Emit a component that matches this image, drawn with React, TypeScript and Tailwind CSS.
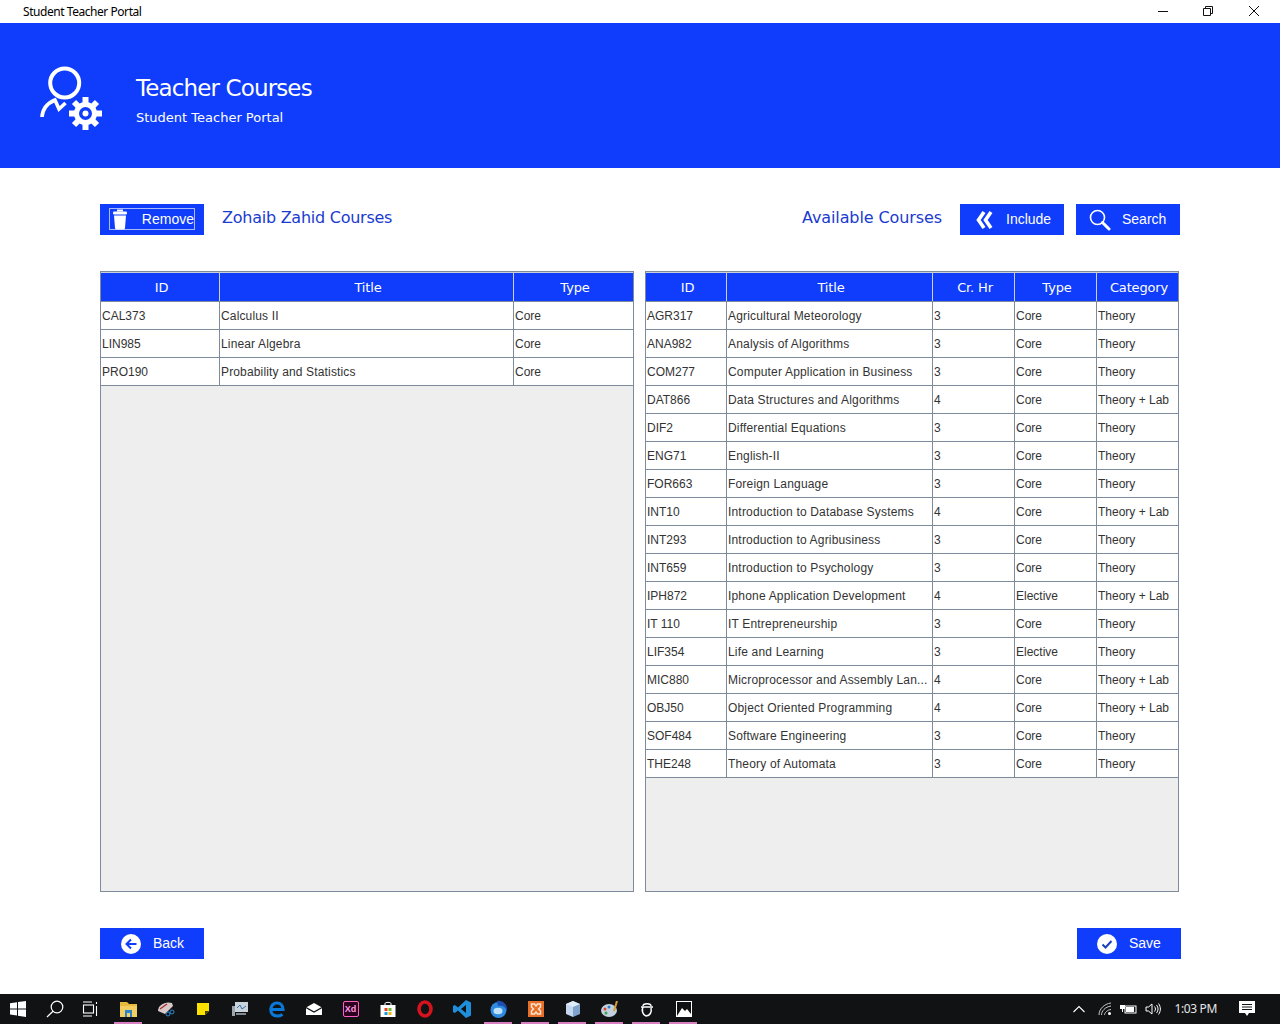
import React from "react";

const BLUE = "bg-[#0f3dfb]";

function HeaderIcon() {
  return (
    <svg width="64" height="68" viewBox="0 0 64 68" fill="none" stroke="white">
      <circle cx="24.7" cy="20" r="14.5" strokeWidth="4" />
      <path d="M2 54 C2.5 46 8 40 15 37 L19 46 L25.5 40" strokeWidth="3.6" />
      <circle cx="45.5" cy="50.5" r="9" strokeWidth="5" />
      <circle cx="45.5" cy="50.5" r="3" fill="white" stroke="none" />
      <g strokeWidth="6">
        <path d="M45.5 34 V40" /><path d="M45.5 61 V67" /><path d="M29 50.5 H35" /><path d="M56 50.5 H62" />
        <path d="M34 39 L38 43" /><path d="M53 58 L57 62" /><path d="M57 39 L53 43" /><path d="M38 58 L34 62" />
      </g>
    </svg>
  );
}

function Btn({ icon, label, w, gap, pad }: { icon: React.ReactNode; label: string; w: string; gap: string; pad: string }) {
  return (
    <div className={`${BLUE} ${w} ${pad} h-[31px] flex items-center text-white text-[14px] font-['Liberation_Sans',sans-serif]`}>
      <span className="shrink-0 flex items-center">{icon}</span>
      <span className={gap}>{label}</span>
    </div>
  );
}

type Col = { name: string; head: string; w: string; cell: string };

function Table({ cols, rows, outer }: { cols: Col[]; rows: string[][]; outer: string }) {
  return (
    <div className={`${outer} h-[621px] border border-[#7d8b9c] bg-[#eeeeee]`}>
      <div className="flex h-[30px] bg-[#c9d0d8] pt-px border-b border-[#7d8b9c] bg-clip-padding">
        {cols.map((c, i) => (
          <div
            key={c.name}
            className={`${c.head} ${BLUE} h-[28px] pl-[3px] pt-px flex items-center justify-center text-white text-[13px] font-['DejaVu_Sans',sans-serif] tracking-[-0.15px] ${i < cols.length - 1 ? "mr-px" : ""}`}
          >
            {c.name}
          </div>
        ))}
      </div>
      {rows.map((r) => (
        <div key={r[0]} className="flex h-[28px] bg-white border-b border-[#7d8b9c]">
          {r.map((v, i) => (
            <div
              key={i}
              className={`${cols[i].w} ${cols[i].cell} pl-px ${i < cols.length - 1 ? "border-r" : ""} border-[#7d8b9c] flex items-center text-[12px] text-[#333333] font-['Liberation_Sans',sans-serif] whitespace-nowrap overflow-hidden`}
            >
              {v}
            </div>
          ))}
        </div>
      ))}
    </div>
  );
}

const leftCols: Col[] = [
  { name: "ID", head: "w-[118px]", w: "w-[119px]", cell: "" },
  { name: "Title", head: "w-[293px]", w: "w-[294px]", cell: "tracking-[0.15px]" },
  { name: "Type", head: "w-[119px]", w: "w-[119px]", cell: "" },
];
const rightCols: Col[] = [
  { name: "ID", head: "w-[80px]", w: "w-[81px]", cell: "" },
  { name: "Title", head: "w-[205px]", w: "w-[206px]", cell: "tracking-[0.18px]" },
  { name: "Cr. Hr", head: "w-[81px]", w: "w-[82px]", cell: "" },
  { name: "Type", head: "w-[81px]", w: "w-[82px]", cell: "" },
  { name: "Category", head: "w-[81px]", w: "w-[81px]", cell: "" },
];
const leftRows = [
  ["CAL373", "Calculus II", "Core"],
  ["LIN985", "Linear Algebra", "Core"],
  ["PRO190", "Probability and Statistics", "Core"],
];
const rightRows = [
  ["AGR317", "Agricultural Meteorology", "3", "Core", "Theory"],
  ["ANA982", "Analysis of Algorithms", "3", "Core", "Theory"],
  ["COM277", "Computer Application in Business", "3", "Core", "Theory"],
  ["DAT866", "Data Structures and Algorithms", "4", "Core", "Theory + Lab"],
  ["DIF2", "Differential Equations", "3", "Core", "Theory"],
  ["ENG71", "English-II", "3", "Core", "Theory"],
  ["FOR663", "Foreign Language", "3", "Core", "Theory"],
  ["INT10", "Introduction to Database Systems", "4", "Core", "Theory + Lab"],
  ["INT293", "Introduction to Agribusiness", "3", "Core", "Theory"],
  ["INT659", "Introduction to Psychology", "3", "Core", "Theory"],
  ["IPH872", "Iphone Application Development", "4", "Elective", "Theory + Lab"],
  ["IT 110", "IT Entrepreneurship", "3", "Core", "Theory"],
  ["LIF354", "Life and Learning", "3", "Elective", "Theory"],
  ["MIC880", "Microprocessor and Assembly Lan...", "4", "Core", "Theory + Lab"],
  ["OBJ50", "Object Oriented Programming", "4", "Core", "Theory + Lab"],
  ["SOF484", "Software Engineering", "3", "Core", "Theory"],
  ["THE248", "Theory of Automata", "3", "Core", "Theory"],
];

function TaskIcon({ children, active }: { children: React.ReactNode; active?: boolean }) {
  return (
    <div className="relative w-[37px] h-[30px] flex items-center justify-center shrink-0">
      {children}
      {active && <div className="absolute bottom-0 left-[4px] right-[5px] h-[2px] bg-[#d77fc0]" />}
    </div>
  );
}

export default function App() {
  return (
    <div className="w-[1280px] h-[1024px] flex flex-col bg-white overflow-hidden">
      <div className="h-[23px] flex items-center pl-[23px] text-[12px] text-black font-['Noto_Sans',sans-serif] tracking-[-0.45px] shrink-0">
        <span className="flex-1">Student Teacher Portal</span>
        <svg width="122" height="23" viewBox="0 0 122 23" fill="none" stroke="#111" strokeWidth="1">
          <path d="M0 11.5 H10" />
          <path d="M45.5 8.5 h7 v7 h-7 z M47.5 8.5 v-2 h7 v7 h-2" />
          <path d="M91 6 L101 16 M101 6 L91 16" />
        </svg>
      </div>

      <div className={`${BLUE} h-[145px] shrink-0 flex items-center pl-[40px]`}>
        <div className="mt-[3px]"><HeaderIcon /></div>
        <div className="ml-[32px] text-white font-['DejaVu_Sans',sans-serif] mt-[7px]">
          <div className="text-[23px] leading-[30px] tracking-[-0.87px]">Teacher Courses</div>
          <div className="text-[13px] leading-[17px] mt-[6px]">Student Teacher Portal</div>
        </div>
      </div>

      <div className="flex-1 px-[100px] pt-[36px] flex flex-col">
        <div className="flex items-center h-[31px]">
          <div className={`${BLUE} w-[104px] h-[31px] p-[4px_9px_4px_9px] shrink-0`}>
            <div className="h-[22px] border border-[#a9b9fb] flex items-center justify-between text-white text-[14px] font-['Liberation_Sans',sans-serif]">
              <svg width="16" height="21" viewBox="0 0 16 21" fill="white" className="ml-[2px]">
                <rect x="1" y="2.5" width="14" height="3" rx="1" />
                <rect x="5" y="0.5" width="6" height="2" />
                <path d="M2 6.5 H14 L13 19 Q13 20.5 11 20.5 H5 Q3 20.5 3 19 Z" />
              </svg>
              <span className="pt-px">Remove</span>
            </div>
          </div>
          <div className="ml-[18px] text-[#1a3bd0] text-[16px] font-['DejaVu_Sans',sans-serif] tracking-[-0.25px] mt-[-3px]">Zohaib Zahid Courses</div>
          <div className="ml-auto text-[#1a3bd0] text-[16px] font-['DejaVu_Sans',sans-serif] tracking-[-0.1px] mt-[-3px]">Available Courses</div>
          <div className="ml-[18px]">
            <Btn
              w="w-[104px]" pad="pl-[15px]" gap="ml-[13px]" label="Include"
              icon={
                <svg width="18" height="20" viewBox="0 0 18 20" fill="none" stroke="white" strokeWidth="3.6">
                  <path d="M9 2 L3.5 10 L9 18" /><path d="M16 2 L10.5 10 L16 18" />
                </svg>
              }
            />
          </div>
          <div className="ml-[12px]">
            <Btn
              w="w-[104px]" pad="pl-[13px]" gap="ml-[11px]" label="Search"
              icon={
                <svg width="22" height="22" viewBox="0 0 22 22" fill="none" stroke="white">
                  <circle cx="8.5" cy="8.5" r="7" strokeWidth="1.6" />
                  <path d="M13.5 13.5 L20 20" strokeWidth="3" strokeLinecap="round" />
                </svg>
              }
            />
          </div>
        </div>

        <div className="flex mt-[36px]">
          <Table outer="w-[534px]" cols={leftCols} rows={leftRows} />
          <div className="w-[11px]" />
          <Table outer="w-[534px]" cols={rightCols} rows={rightRows} />
        </div>

        <div className="flex justify-between mt-[36px] w-[1081px]">
          <Btn
            w="w-[104px]" pad="pl-[21px]" gap="ml-[12px]" label="Back"
            icon={
              <svg width="20" height="20" viewBox="0 0 20 20">
                <circle cx="10" cy="10" r="10" fill="white" />
                <path d="M15.5 10 H5.5 M10 5.5 L5.5 10 L10 14.5" fill="none" stroke="#0f3dfb" strokeWidth="2" />
              </svg>
            }
          />
          <Btn
            w="w-[104px]" pad="pl-[20px]" gap="ml-[12px]" label="Save"
            icon={
              <svg width="20" height="20" viewBox="0 0 20 20">
                <circle cx="10" cy="10" r="10" fill="white" />
                <path d="M5.5 10.5 L8.5 13.5 L14.5 7" fill="none" stroke="#1c3fc0" strokeWidth="2" />
              </svg>
            }
          />
        </div>
      </div>

      <div className="h-[30px] bg-[#111214] shrink-0 flex items-center text-white">
        <div className="w-[36px] h-[30px] flex items-center justify-center">
          <svg width="16" height="16" viewBox="0 0 16 16" fill="white">
            <path d="M0 2.3 L7 1.3 V7.4 H0 Z M8 1.1 L16 0 V7.4 H8 Z M0 8.4 H7 V14.6 L0 13.6 Z M8 8.4 H16 V16 L8 14.8 Z" />
          </svg>
        </div>
        <TaskIcon>
          <svg width="18" height="18" viewBox="0 0 18 18" fill="none" stroke="white" strokeWidth="1.2">
            <circle cx="11" cy="7" r="5.8" /><path d="M7 11.3 L1 17" />
          </svg>
        </TaskIcon>
        <TaskIcon>
          <svg width="16" height="16" viewBox="0 0 16 16" fill="none" stroke="white" strokeWidth="1.1" className="mr-[4px]">
            <path d="M1 1 H10 M1 15 H10" /><rect x="1.5" y="4" width="10" height="8" /><path d="M14.5 1 V3 M14.5 5 V15" />
          </svg>
        </TaskIcon>
        <TaskIcon active>
          <svg width="18" height="16" viewBox="0 0 18 16">
            <path d="M0 1 H7 L9 3 H17 V6 H0 Z" fill="#e8b93c" /><rect x="0" y="5" width="17" height="11" fill="#f3cf63" /><rect x="5" y="9" width="7" height="7" fill="#2a86c8" /><rect x="7" y="12" width="3" height="4" fill="#f3cf63" />
          </svg>
        </TaskIcon>
        <TaskIcon>
          <svg width="18" height="16" viewBox="0 0 18 16">
            <path d="M1 10 C1 4 8 0 15 2 L16 5 L8 13 Z" fill="#d9c9c9" /><path d="M3 8 L10 3" stroke="#a33" strokeWidth="1.5" /><circle cx="11" cy="13" r="2" fill="none" stroke="#2a8ad0" /><circle cx="15" cy="11" r="2" fill="none" stroke="#2a8ad0" />
          </svg>
        </TaskIcon>
        <TaskIcon>
          <svg width="12" height="12" viewBox="0 0 12 12">
            <path d="M0 0 H12 V8 L8 12 H0 Z" fill="#ffe100" /><path d="M12 8 H8 V12 Z" fill="#443c00" />
          </svg>
        </TaskIcon>
        <TaskIcon>
          <svg width="16" height="16" viewBox="0 0 16 16">
            <rect x="3" y="1" width="13" height="10" fill="#c9d3dc" /><path d="M5 7 L8 4 L10 8 L14 5" stroke="#3a6ea8" fill="none" /><rect x="0" y="5" width="3" height="10" fill="#9aa7ad" /><rect x="4" y="12" width="10" height="2" fill="#7f8b90" />
          </svg>
        </TaskIcon>
        <TaskIcon>
          <svg width="16" height="17" viewBox="0 0 16 17" fill="none" stroke="#0a78d7" strokeWidth="3.2">
            <path d="M2 8.5 H14 C14 4.5 11.5 2 8 2 C4.5 2 1.8 5 1.8 8.5 C1.8 12.5 4.5 15 8.5 15 C10.5 15 12 14.5 13.5 13.5" />
          </svg>
        </TaskIcon>
        <TaskIcon>
          <svg width="16" height="12" viewBox="0 0 16 12">
            <path d="M0 4.5 L8 0 L16 4.5 V12 H0 Z" fill="white" /><path d="M0 4.5 L8 9 L16 4.5" fill="none" stroke="#111214" strokeWidth="1.2" />
          </svg>
        </TaskIcon>
        <TaskIcon>
          <div className="w-[16px] h-[16px] rounded-[2px] border border-[#ff5fc4] bg-[#2e001f] text-[#ff9ae0] text-[9px] font-bold leading-[14px] text-center font-['Liberation_Sans',sans-serif]">Xd</div>
        </TaskIcon>
        <TaskIcon>
          <svg width="16" height="16" viewBox="0 0 16 16">
            <rect x="0.5" y="4" width="15" height="12" fill="white" /><path d="M5 5 V2.5 C5 1 11 1 11 2.5 V5" fill="none" stroke="white" /><rect x="4.5" y="7" width="3" height="3" fill="#e8431f" /><rect x="8.5" y="7" width="3" height="3" fill="#6ebb2c" /><rect x="4.5" y="11" width="3" height="3" fill="#1a9be0" /><rect x="8.5" y="11" width="3" height="3" fill="#f5b50e" />
          </svg>
        </TaskIcon>
        <TaskIcon>
          <svg width="16" height="18" viewBox="0 0 16 18">
            <ellipse cx="8" cy="9" rx="6" ry="7" fill="none" stroke="#d5121d" strokeWidth="3.6" />
          </svg>
        </TaskIcon>
        <TaskIcon>
          <svg width="18" height="18" viewBox="0 0 18 18">
            <path d="M13 0 L18 2.5 V15.5 L13 18 L5 10.5 L1.8 13 L0 12 V6 L1.8 5 L5 7.5 Z M13 5 L8 9 L13 13 Z" fill="#1f8fdc" fillRule="evenodd" />
          </svg>
        </TaskIcon>
        <TaskIcon active>
          <svg width="18" height="18" viewBox="0 0 18 18">
            <circle cx="8.5" cy="10" r="8" fill="#2f8be0" /><path d="M7 1 C13 0 18 5 17 11 C15 6 12 5 8 6 Z" fill="#1c4fb0" /><ellipse cx="8" cy="11" rx="4.5" ry="3.2" fill="#bfe2fb" />
          </svg>
        </TaskIcon>
        <TaskIcon active>
          <svg width="16" height="16" viewBox="0 0 16 16">
            <rect width="16" height="16" fill="#e66f2a" /><path d="M3.5 3 H6.5 L8 5 L9.5 3 H12.5 V6 L10.5 8 L12.5 10 V13 H9.5 L8 11 L6.5 13 H3.5 V10 L5.5 8 L3.5 6 Z" fill="none" stroke="#ffe3cf" strokeWidth="1.5" />
          </svg>
        </TaskIcon>
        <TaskIcon active>
          <svg width="14" height="16" viewBox="0 0 14 16">
            <path d="M7 0 L14 3 V13 L7 16 Z" fill="#7fa3cc" /><path d="M7 0 L0 3 V13 L7 16 Z" fill="#c4d7ee" /><path d="M0 3 L7 6 L14 3 L7 0 Z" fill="#e0ebf8" />
          </svg>
        </TaskIcon>
        <TaskIcon active>
          <svg width="18" height="16" viewBox="0 0 18 16">
            <ellipse cx="8" cy="9.5" rx="8" ry="6.5" fill="#c3d1de" /><circle cx="4" cy="8" r="1.5" fill="#e0442e" /><circle cx="8" cy="6" r="1.5" fill="#2a7fcf" /><circle cx="5" cy="12" r="1.5" fill="#3aa352" /><path d="M16 0 L13 10" stroke="#d99a3a" strokeWidth="2" />
          </svg>
        </TaskIcon>
        <TaskIcon active>
          <svg width="14" height="16" viewBox="0 0 14 16" fill="none" stroke="white" strokeWidth="1.5">
            <path d="M3 5 C3 2 11 2 11 5 M1 6 H13 M3 6 C1.5 9 2.5 14 6 15 C10 15 12 11 11 7" />
          </svg>
        </TaskIcon>
        <TaskIcon active>
          <svg width="16" height="16" viewBox="0 0 16 16">
            <rect width="16" height="16" fill="white" /><rect x="1" y="1" width="14" height="14" fill="#111" /><path d="M1 15 L6 7 L9 10 L11 8 L15 13 V15 Z" fill="white" />
          </svg>
        </TaskIcon>
        <div className="ml-auto flex items-center">
          <svg width="12" height="8" viewBox="0 0 12 8" fill="none" stroke="white" strokeWidth="1.1" className="mr-[13px]"><path d="M0.5 7 L6 1.5 L11.5 7" /></svg>
          <svg width="14" height="14" viewBox="0 0 14 14" fill="none" stroke="#c9c9c9" strokeWidth="1" className="mr-[8px]"><path d="M1 13 C1 7 6 2 13 1 M3.5 13 C3.5 9 7 5 13 4 M6.5 13 C6.5 11 9 8 13 7.5" /><circle cx="11.5" cy="11.5" r="1.5" fill="white" stroke="none" /></svg>
          <svg width="17" height="12" viewBox="0 0 17 12" fill="white" className="mr-[8px]"><rect x="5" y="3" width="11" height="7" fill="none" stroke="white" /><rect x="6" y="4" width="8" height="5" /><path d="M0 2 H5 V6 H3 V9 H2 V6 H0 Z" /></svg>
          <svg width="16" height="14" viewBox="0 0 16 14" fill="none" stroke="white" strokeWidth="1" className="mr-[13px]"><path d="M1 5 H3.5 L7 2 V12 L3.5 9 H1 Z" /><path d="M9.5 4.5 C10.8 6 10.8 8 9.5 9.5 M11.5 3 C13.5 5.5 13.5 8.5 11.5 11 M13.5 1.5 C16 5 16 9 13.5 12.5" /></svg>
          <span className="text-[12px] text-[#e6e6e6] font-['Noto_Sans',sans-serif] tracking-[-0.35px] mr-[22px]">1:03 PM</span>
          <svg width="16" height="16" viewBox="0 0 16 16" className="mr-[25px]"><path d="M0 0 H16 V12 H10 L8 15 L6 12 H0 Z" fill="white" /><path d="M3 3.5 H13 M3 6 H13 M3 8.5 H13" stroke="#111214" /></svg>
        </div>
      </div>
    </div>
  );
}
